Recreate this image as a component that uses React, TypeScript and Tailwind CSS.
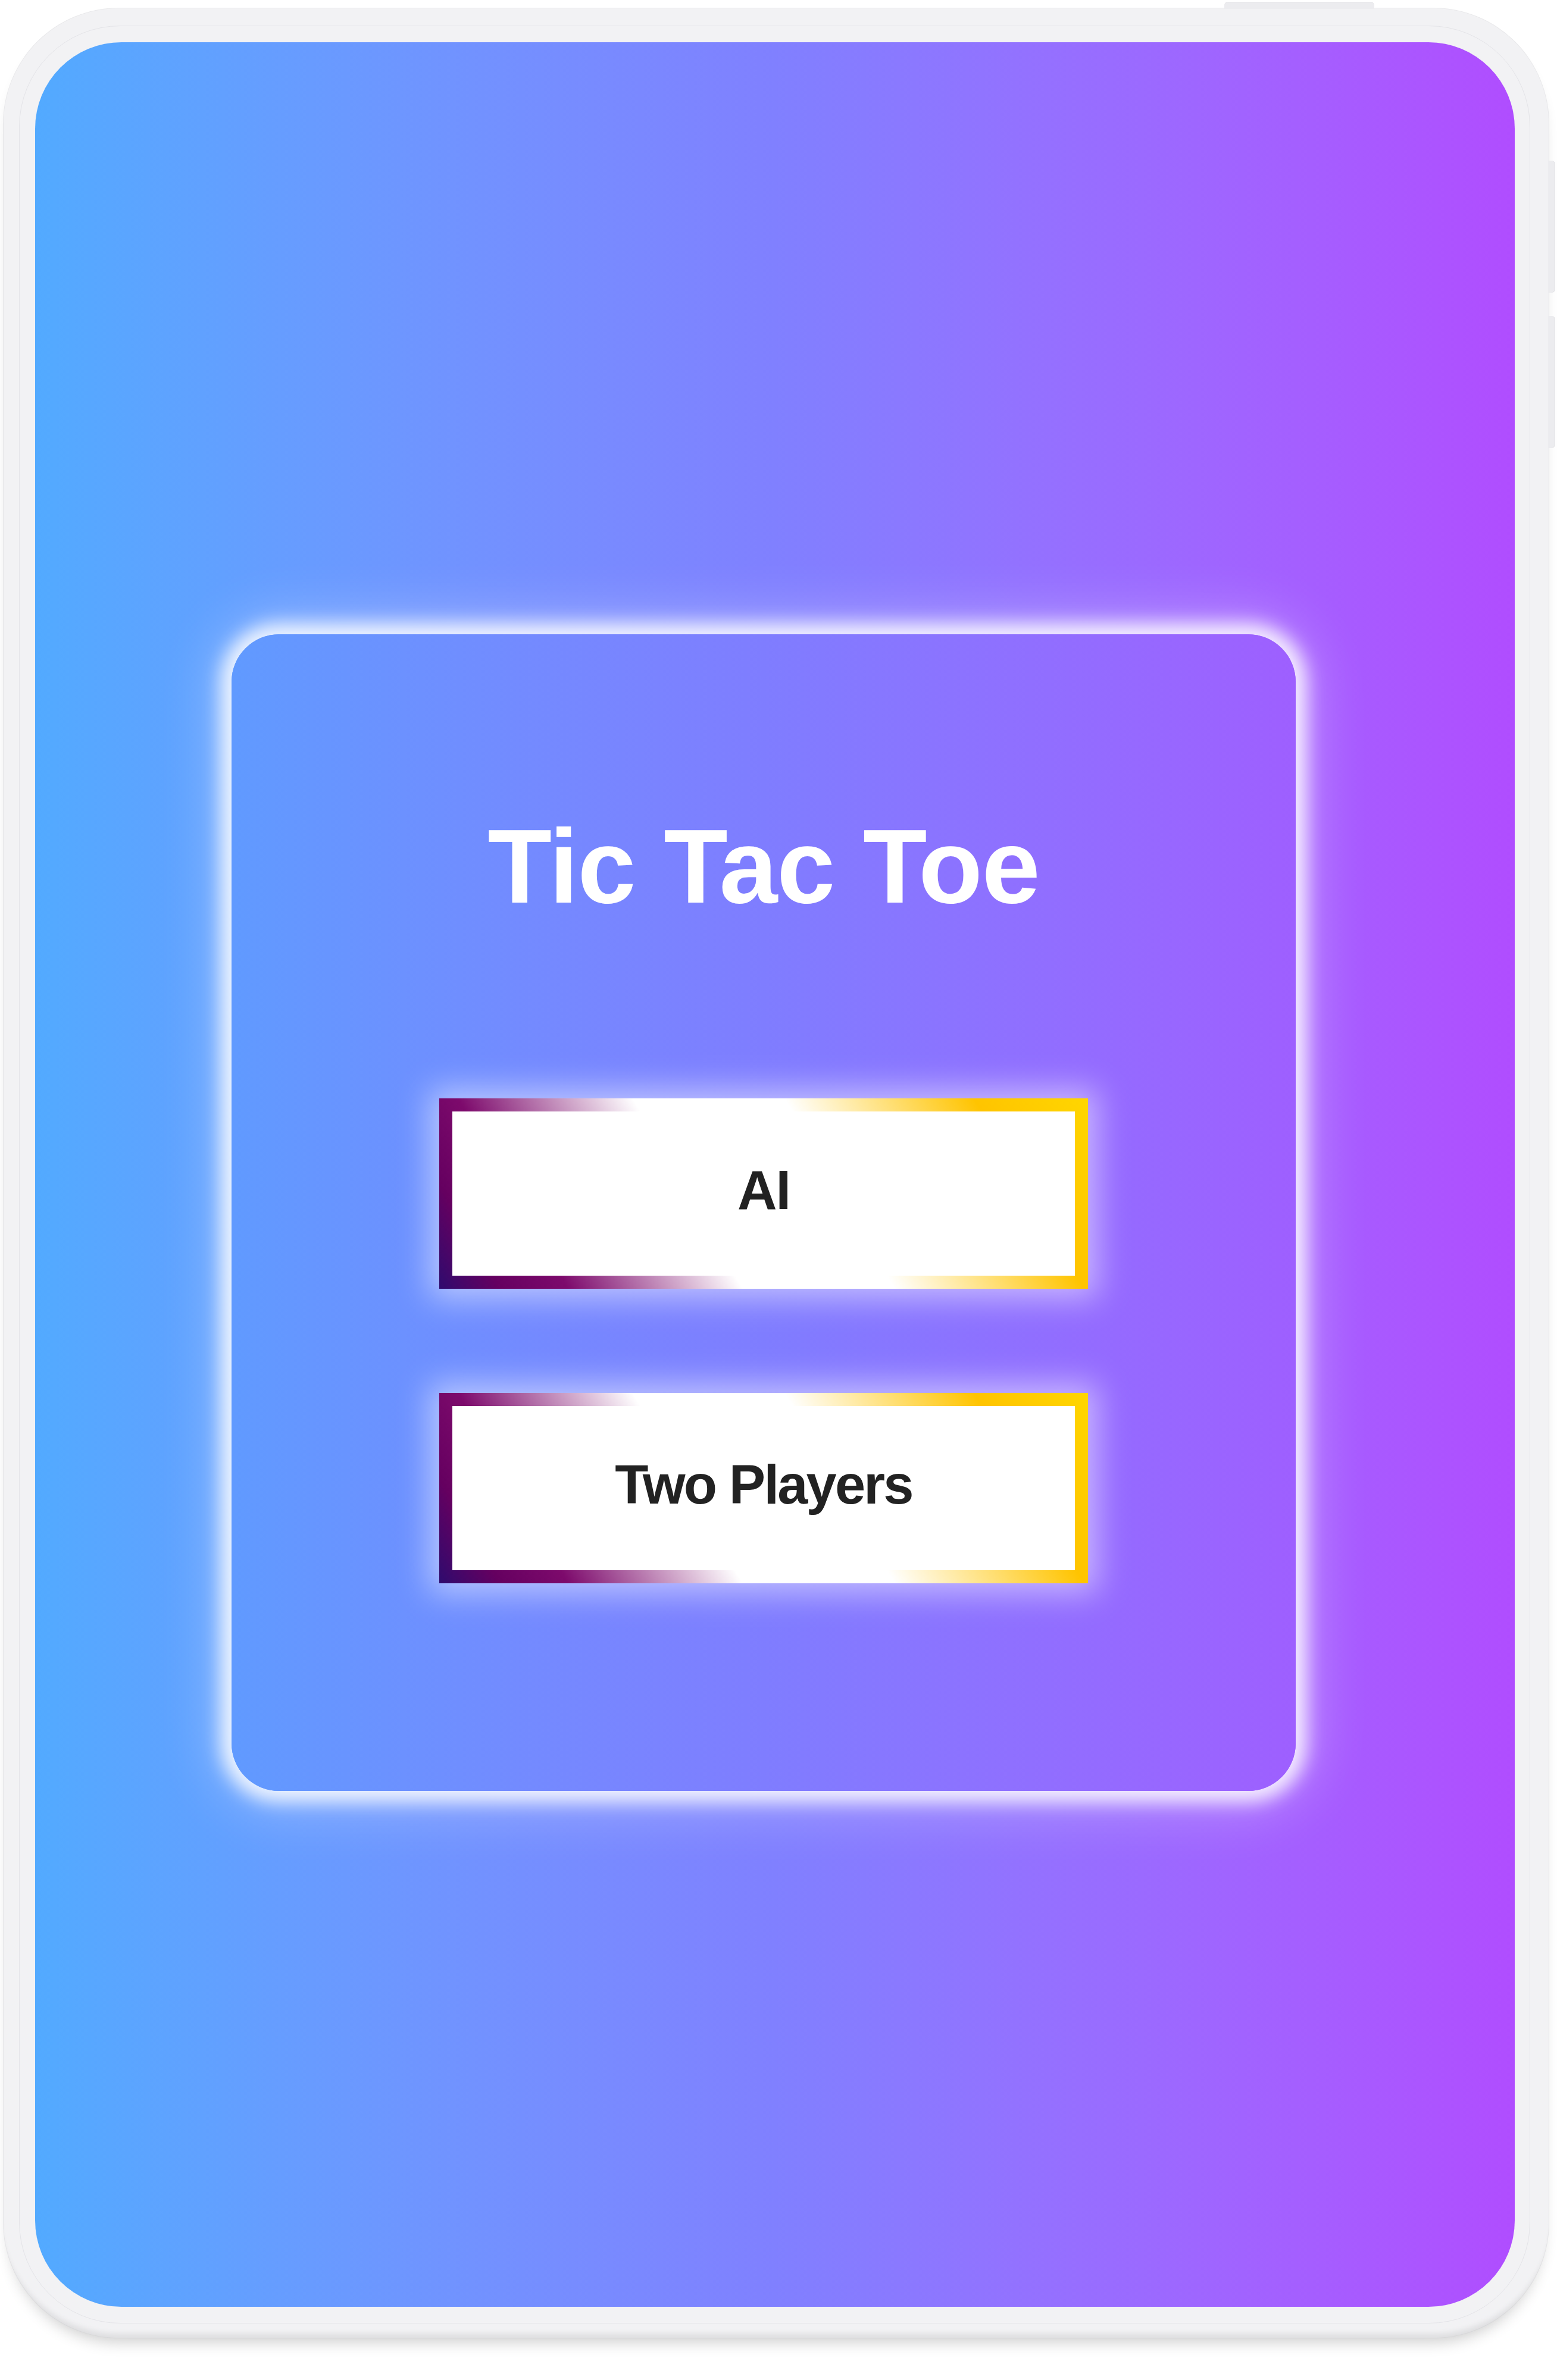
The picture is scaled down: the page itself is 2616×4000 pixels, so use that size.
import React from "react";

function ModeButton({ label, tracking }: { label: string; tracking: string }) {
  return (
    <div className="w-[1090px] h-[320px] p-[22px] bg-[linear-gradient(60deg,#2e0b6e_0%,#650060_8%,#7d0a6c_17%,#ffffff_40%,#ffffff_60%,#ffc400_85%,#ffd600_100%)] shadow-[0_0_50px_16px_rgba(255,255,255,0.5)]">
      <div className="w-full h-full bg-white flex items-center justify-center pb-[12px]">
        <span
          className={
            "font-['Liberation_Sans',Arial,sans-serif] font-bold text-[92px] leading-none text-[#222222] " +
            tracking
          }
        >
          {label}
        </span>
      </div>
    </div>
  );
}

export default function App() {
  return (
    <div className="w-[2616px] h-[4000px] bg-white pt-[13px] pl-[5px]">
      <div className="relative w-[2598px] h-[3917px] rounded-[195px] bg-[#f2f2f4] pt-[30px] pl-[27px] pr-[32px] pb-[25px] shadow-[inset_0_-14px_10px_-6px_rgba(0,0,0,0.08),inset_0_0_0_1px_rgba(0,0,0,0.04),0_18px_26px_-12px_rgba(0,0,0,0.2)]">
        {/* hardware buttons */}
        <div className="absolute left-[2052px] top-[-10px] w-[252px] h-[12px] rounded-t-[6px] bg-[#ececef] shadow-[inset_0_1px_0_rgba(0,0,0,0.04)]" />
        <div className="absolute left-[2596px] top-[257px] w-[12px] h-[222px] rounded-r-[6px] bg-[#ececef] shadow-[inset_-1px_0_0_rgba(0,0,0,0.05)]" />
        <div className="absolute left-[2596px] top-[518px] w-[12px] h-[222px] rounded-r-[6px] bg-[#ececef] shadow-[inset_-1px_0_0_rgba(0,0,0,0.05)]" />

        <div className="w-full h-full rounded-[170px] border border-[#e4e4e8] pt-[27px] pl-[26px] pr-[25px] pb-[27px]">
          <div className="w-full h-full rounded-[145px] overflow-hidden bg-gradient-to-r from-[#52aaff] via-[#8080ff] to-[#b04dff] pt-[995px] pl-[330px]">
            <div className="w-[1788px] h-[1944px] rounded-[80px] bg-gradient-to-r from-[#609aff] via-[#7f7dff] to-[#9e5fff] shadow-[0_0_30px_18px_rgba(255,255,255,0.85),0_0_90px_30px_rgba(255,255,255,0.3)] flex flex-col items-center pt-[302px]">
              <h1 className="font-['Liberation_Sans',Arial,sans-serif] font-bold text-[176px] leading-none text-white tracking-[-1.1px]">
                Tic Tac Toe
              </h1>
              <div className="mt-[302px] flex flex-col gap-[175px]">
                <ModeButton label="AI" tracking="tracking-[-2px]" />
                <ModeButton label="Two Players" tracking="tracking-[-2.8px]" />
              </div>
            </div>
          </div>
        </div>
      </div>
    </div>
  );
}
